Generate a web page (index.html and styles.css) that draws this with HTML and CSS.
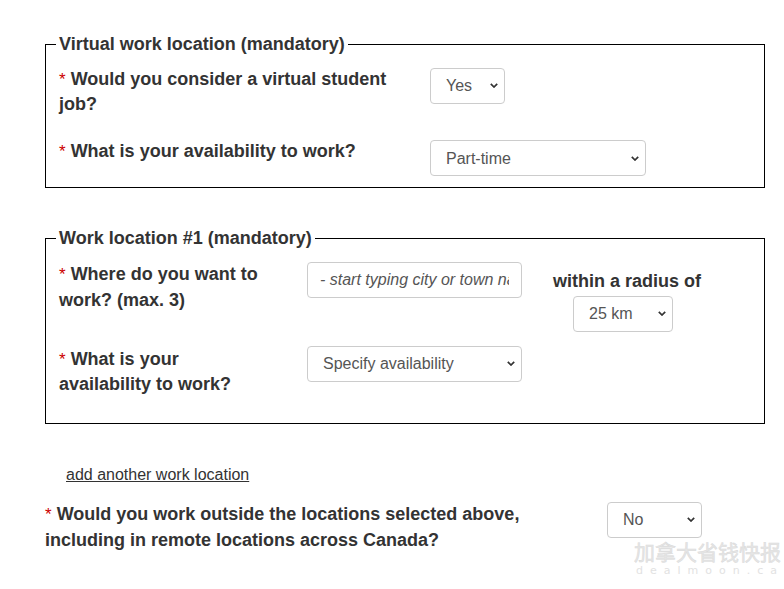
FILE: index.html
```html
<!DOCTYPE html>
<html lang="en">
<head>
<meta charset="utf-8">
<title>Work location</title>
<link rel="stylesheet" href="styles.css">
</head>
<body>
<main class="page">
  <fieldset class="group group-virtual">
    <legend>Virtual work location (mandatory)</legend>
    <div class="row row-virtual">
      <label class="q q-virtual"><span class="req">*</span> Would you consider a virtual student job?</label>
      <select class="sel sel-yes"><option>Yes</option><option>No</option></select>
    </div>
    <div class="row row-virtual row-second">
      <label class="q q-virtual"><span class="req">*</span> What is your availability to work?</label>
      <select class="sel sel-parttime"><option>Part-time</option><option>Full-time</option></select>
    </div>
  </fieldset>

  <fieldset class="group group-loc">
    <legend>Work location #1 (mandatory)</legend>
    <div class="row row-loc">
      <label class="q q-loc"><span class="req">*</span> Where do you want to work? (max. 3)</label>
      <input class="city" type="text" placeholder="- start typing city or town name -">
      <div class="radius">
        <span class="radius-label">within a radius of</span>
        <select class="sel sel-km"><option>25 km</option><option>50 km</option></select>
      </div>
    </div>
    <div class="row row-loc row-second-loc">
      <label class="q q-loc"><span class="req">*</span> What is your availability to work?</label>
      <select class="sel sel-specify"><option>Specify availability</option></select>
    </div>
  </fieldset>

  <div class="add-wrap"><a class="add-link" href="#">add another work location</a></div>

  <div class="row row-outside">
    <label class="q q-outside"><span class="req">*</span> Would you work outside the locations selected above, including in remote locations across Canada?</label>
    <select class="sel sel-no"><option>No</option><option>Yes</option></select>
  </div>
</main>
<div class="watermark">
  <span class="wm-cn">加拿大省钱快报</span>
  <span class="wm-en">dealmoon.ca</span>
</div>
</body>
</html>
```
FILE: styles.css
```css
html, body {
  margin: 0;
  padding: 0;
  background: #fff;
}
body {
  font-family: "Liberation Sans", Arial, sans-serif;
  color: #333;
  width: 784px;
  height: 589px;
  overflow: hidden;
  position: relative;
}
.page {
  padding: 32px 0 0 45px;
  width: 720px;
}
.group {
  margin: 0;
  border: 1px solid #000;
  padding: 9px 13px 11px 13px;
  min-width: 0;
}
.group legend {
  margin-left: -3px;
  padding: 0 3px;
  font-size: 18px;
  font-weight: bold;
  line-height: 25.7px;
}
.q {
  font-size: 18px;
  font-weight: bold;
  line-height: 25.7px;
}
.req {
  color: #c00;
  font-weight: normal;
  font-size: 17px;
}
.row {
  display: grid;
  align-items: start;
}
.row-virtual {
  grid-template-columns: 371px auto;
}
.q-virtual {
  max-width: 345px;
}
.row-second {
  margin-top: 21px;
}
.sel {
  -webkit-appearance: none;
  appearance: none;
  height: 36px;
  box-sizing: border-box;
  border: 1px solid #ccc;
  border-radius: 4px;
  background-color: #fff;
  background-image: url("data:image/svg+xml,%3Csvg xmlns='http://www.w3.org/2000/svg' width='8' height='5' viewBox='0 0 8 5'%3E%3Cpath d='M0.8 0.8 L4 4 L7.2 0.8' fill='none' stroke='%23333' stroke-width='1.7'/%3E%3C/svg%3E");
  background-repeat: no-repeat;
  background-position: right 6px center;
  background-size: 8px 5px;
  padding: 0 20px 0 15px;
  font-family: "Liberation Sans", Arial, sans-serif;
  font-size: 16px;
  color: #555;
  margin: 1px 0 0 0;
  justify-self: start;
}
.sel-yes { width: 75px; }
.sel-parttime { width: 216px; }
.sel-km { width: 100px; margin: 1px 8px 0 0; }
.sel-specify { width: 215px; margin-top: 0; }
.sel-no { width: 95px; margin-top: 0; }

.group-loc {
  margin-top: 38px;
  padding-top: 10.5px;
  padding-bottom: 25px;
}
.row-loc {
  grid-template-columns: 248px 215px auto;
}
.q-loc {
  max-width: 212px;
}
.city {
  box-sizing: border-box;
  width: 215px;
  height: 36px;
  border: 1px solid #ccc;
  border-radius: 4px;
  padding: 0 12px;
  font-family: "Liberation Sans", Arial, sans-serif;
  font-size: 16px;
  color: #555;
  margin: 0;
}
.city::placeholder {
  color: #555;
  font-style: italic;
  opacity: 1;
}
.radius {
  display: flex;
  flex-direction: column;
  align-items: center;
  padding: 6.5px 0 0 30px;
  width: 150px;
}
.radius-label {
  font-size: 18px;
  font-weight: bold;
  line-height: 25.7px;
  white-space: nowrap;
}
.row-second-loc {
  margin-top: 14px;
}
.row-second-loc .q-loc {
  margin-top: 1px;
}
.add-wrap {
  padding: 39px 0 0 21px;
  font-size: 16px;
  line-height: 24px;
}
.add-link {
  color: #333;
  text-decoration: underline;
}
.row-outside {
  grid-template-columns: 562px auto;
  margin-top: 15px;
}
.q-outside {
  max-width: 510px;
}
.watermark {
  position: absolute;
  left: 634px;
  top: 538px;
  display: flex;
  flex-direction: column;
  pointer-events: none;
  white-space: nowrap;
}
.wm-cn {
  font-family: "Noto Sans CJK SC", sans-serif;
  font-size: 21px;
  line-height: 26px;
  color: #e6e6e6;
  -webkit-text-stroke: 0.5px #dadada;
}
.wm-en {
  font-family: "DejaVu Sans", sans-serif;
  font-size: 11px;
  line-height: 14px;
  letter-spacing: 7px;
  color: #e2e2e2;
  padding-left: 2px;
}
```
